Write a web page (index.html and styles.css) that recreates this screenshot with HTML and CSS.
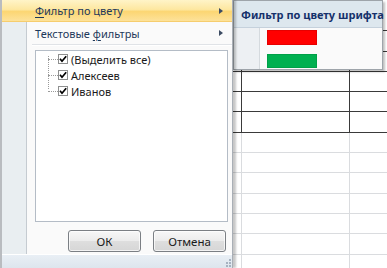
FILE: index.html
```html
<!DOCTYPE html>
<html lang="ru">
  <head>
    <meta charset="UTF-8" />
    <title>Фильтр по цвету</title>
    <link rel="stylesheet" href="styles.css">
  </head>
  <body>
    <div class="screen">
      <!-- Left: autofilter dropdown -->
      <div class="filter-menu">
        <div class="menu-body">
          <div class="menu-item is-active">
            <span><u>Ф</u>ильтр по цвету</span>
            <span class="arrow"></span>
          </div>
          <div class="menu-item">
            <span>Текстовые <u>ф</u>ильтры</span>
            <span class="arrow"></span>
          </div>
          <div class="separator"></div>

          <div class="value-list">
            <ul class="tree">
              <li>
                <svg class="check" width="10" height="10" viewBox="0 0 10 10"><rect x="0.5" y="0.5" width="9" height="9" fill="#fff" stroke="#8e8f8f"/><path d="M2 4.8 L4 7.2 L8.2 2.2" fill="none" stroke="#000" stroke-width="1.7"/></svg>
                <span>(Выделить все)</span>
              </li>
              <li>
                <svg class="check" width="10" height="10" viewBox="0 0 10 10"><rect x="0.5" y="0.5" width="9" height="9" fill="#fff" stroke="#8e8f8f"/><path d="M2 4.8 L4 7.2 L8.2 2.2" fill="none" stroke="#000" stroke-width="1.7"/></svg>
                <span>Алексеев</span>
              </li>
              <li>
                <svg class="check" width="10" height="10" viewBox="0 0 10 10"><rect x="0.5" y="0.5" width="9" height="9" fill="#fff" stroke="#8e8f8f"/><path d="M2 4.8 L4 7.2 L8.2 2.2" fill="none" stroke="#000" stroke-width="1.7"/></svg>
                <span>Иванов</span>
              </li>
            </ul>
          </div>

          <div class="buttons">
            <button class="btn">ОК</button>
            <button class="btn">Отмена</button>
          </div>
        </div>
        <div class="menu-footer">
          <svg class="grip" width="7" height="9" viewBox="0 0 7 9">
            <rect x="5" y="1" width="2" height="2" fill="#a6b2c0"/>
            <rect x="5" y="4" width="2" height="2" fill="#a6b2c0"/>
            <rect x="2" y="4" width="2" height="2" fill="#a6b2c0"/>
            <rect x="5" y="7" width="2" height="2" fill="#a6b2c0"/>
            <rect x="2" y="7" width="2" height="2" fill="#a6b2c0"/>
          </svg>
        </div>
      </div>

      <!-- Right: worksheet behind the submenu -->
      <div class="sheet">
        <div class="cell boxed"></div><div class="cell boxed"></div><div class="cell boxed"></div>
        <div class="cell boxed"></div><div class="cell boxed"></div><div class="cell boxed"></div>
        <div class="cell boxed"></div><div class="cell boxed"></div><div class="cell boxed"></div>
        <div class="cell boxed"></div><div class="cell boxed"></div><div class="cell boxed"></div>
        <div class="cell boxed"></div><div class="cell boxed"></div><div class="cell boxed"></div>
        <div class="cell boxed"></div><div class="cell boxed"></div><div class="cell boxed"></div>
        <div class="cell"></div><div class="cell"></div><div class="cell"></div>
        <div class="cell"></div><div class="cell"></div><div class="cell"></div>
        <div class="cell"></div><div class="cell"></div><div class="cell"></div>
        <div class="cell"></div><div class="cell"></div><div class="cell"></div>
        <div class="cell"></div><div class="cell"></div><div class="cell"></div>
        <div class="cell"></div><div class="cell"></div><div class="cell"></div>
        <div class="cell last"></div><div class="cell last"></div><div class="cell last"></div>

        <!-- Submenu: font colour filter -->
        <div class="color-menu">
          <div class="color-menu-title">Фильтр по цвету шрифта</div>
          <div class="color-menu-body">
            <div class="swatch swatch-red"></div>
            <div class="swatch swatch-green"></div>
          </div>
        </div>
      </div>
    </div>
  </body>
</html>
```

FILE: styles.css
```css
/* ============ Base ============ */
html,
body {
  margin: 0;
  height: 100%;
  overflow: hidden;
  background: #fff;
  font-family: "Noto Sans", "Open Sans", sans-serif;
  font-size: 11px;
}

.screen {
  display: flex;
  width: 387px;
  height: 268px;
}

/* ============ Filter dropdown ============ */
.filter-menu {
  position: relative;
  z-index: 2;
  flex: 0 0 233px;
  display: flex;
  flex-direction: column;
  box-sizing: border-box;
  border-left: 2px solid #b9bcc0;
  border-right: 1px solid #a9afb6;
  box-shadow: 3px 0 2px rgba(0, 0, 0, 0.22);
}

.menu-body {
  flex: 1 1 auto;
  display: flex;
  flex-direction: column;
  /* gutter on the left, as in Office menus */
  background: linear-gradient(to right, #e9eef1 24px, #c5cbd1 24px 25px, #fafafa 25px);
}

.menu-item {
  display: flex;
  align-items: center;
  justify-content: space-between;
  height: 22px;
  padding: 0 9px 0 33px;
  color: #1e395b;
  white-space: nowrap;
}
.menu-item.is-active {
  background: linear-gradient(#fff4c8, #fde7a0 45%, #fcd673 55%, #fde29a);
  border-bottom: 1px solid #f6cd6e;
  height: 21px;
}
.menu-item u {
  text-decoration-thickness: 1px;
  text-underline-offset: 2px;
}

.arrow {
  width: 0;
  height: 0;
  border-left: 4px solid #3d4c63;
  border-top: 3.5px solid transparent;
  border-bottom: 3.5px solid transparent;
}

.separator {
  height: 1px;
  margin: 0 0 0 30px;
  background: #e0e3e7;
  border-bottom: 1px solid #fff;
}

/* ============ Value list ============ */
.value-list {
  height: 170px;
  margin: 4px 4px 0 33px;
  border: 1px solid #b4bcc6;
  background: #fff;
}

.tree {
  position: relative;
  list-style: none;
  margin: 0;
  padding: 0 0 0 22px;
}
/* dotted trunk */
.tree::before {
  content: "";
  position: absolute;
  left: 12px;
  top: 5px;
  height: 33px;
  border-left: 1px dotted #9a9a9a;
}
.tree li {
  position: relative;
  display: flex;
  align-items: center;
  gap: 3px;
  height: 16px;
  color: #1a1a1a;
}
.tree li::before {
  content: "";
  position: absolute;
  left: -10px;
  top: 8px;
  width: 10px;
  border-top: 1px dotted #9a9a9a;
}
.check {
  flex: 0 0 10px;
  position: relative;
}

/* ============ Buttons ============ */
.buttons {
  display: flex;
  justify-content: flex-end;
  gap: 12px;
  padding: 8px 6px 0 0;
}
.btn {
  width: 73px;
  height: 22px;
  padding: 0;
  border: 1px solid #7b7f84;
  border-radius: 3px;
  background: linear-gradient(#f7f7f7, #ececec 48%, #dedede 52%, #d6d6d6);
  box-shadow: inset 0 0 0 1px rgba(255, 255, 255, 0.7);
  font: inherit;
  font-size: 11.5px;
  color: #1a1a1a;
}

.menu-footer {
  flex: 0 0 12px;
  display: flex;
  justify-content: flex-end;
  align-items: flex-end;
  padding: 0 1px 1px 0;
  border-top: 1px solid #fff;
  background: linear-gradient(#e9eff5, #dde5ed);
}

/* ============ Worksheet ============ */
.sheet {
  position: relative;
  flex: 1 1 auto;
  display: grid;
  grid-template-columns: 9px 108px 1fr;
  grid-template-rows: 31px 21px 20px 20px 20px 21px 20px 20px 21px 20px 20px 21px 1fr;
}
.cell {
  box-sizing: border-box;
  border-bottom: 1px solid #dadcdf;
  border-right: 1px solid #dadcdf;
}
.cell.boxed {
  border-bottom-color: #3a3a3a;
  border-right-color: #3a3a3a;
}
.cell:nth-child(3n) {
  border-right: 0;
}
.cell.last {
  border-bottom: 0;
}

/* ============ Colour submenu ============ */
.color-menu {
  position: absolute;
  top: 0;
  left: 0;
  width: 150px;
  height: 70px;
  box-sizing: border-box;
  border: 1px solid #9ea4aa;
  background: #fafafa;
  box-shadow: 2px 2px 2px rgba(0, 0, 0, 0.25);
  display: flex;
  flex-direction: column;
}
.color-menu-title {
  height: 26px;
  padding-left: 7px;
  display: flex;
  align-items: center;
  background: #dde7ee;
  border-bottom: 1px solid #c5d1dc;
  color: #15316b;
  font-weight: bold;
  white-space: nowrap;
}
.color-menu-body {
  flex: 1 1 auto;
  display: flex;
  flex-direction: column;
  gap: 9px;
  padding: 2px 0 0 33px;
  background: linear-gradient(to right, #edf0f3 25px, #d5dade 25px 26px, #fafafa 26px);
}
.swatch {
  width: 50px;
  height: 15px;
  box-sizing: border-box;
}
.swatch-red {
  background: #ff0000;
  border: 1px solid #e60000;
}
.swatch-green {
  height: 14px;
  background: #00b050;
  border: 1px solid #00a048;
}
```
